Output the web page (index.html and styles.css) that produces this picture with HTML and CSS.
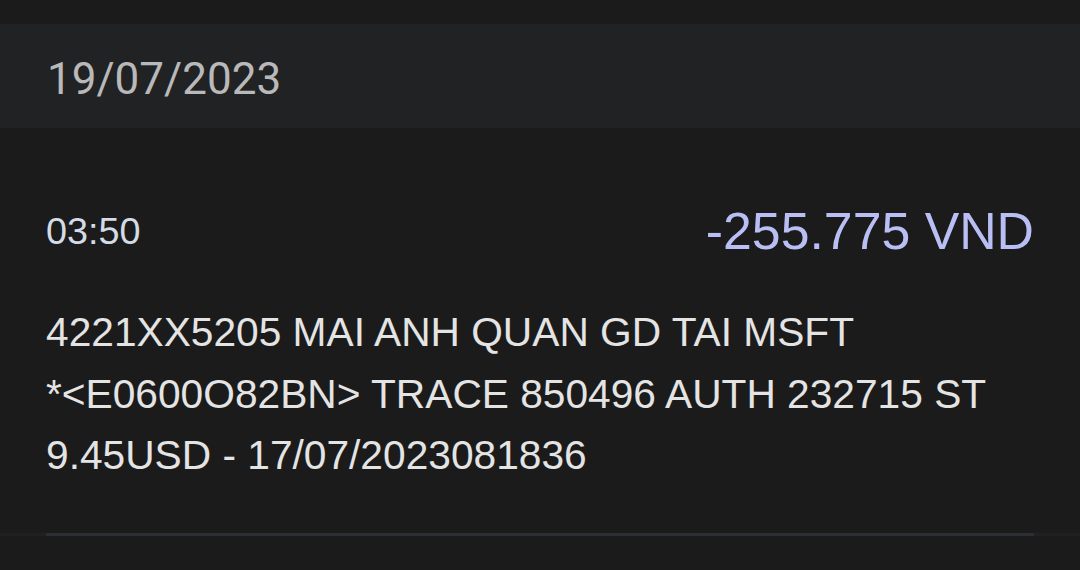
FILE: index.html
```html
<!DOCTYPE html>
<html>
<head>
<meta charset="utf-8">
<link rel="stylesheet" href="styles.css">
</head>
<body>
  <div class="page">
    <div class="topbar"></div>
    <div class="date-header">19/07/2023</div>
    <div class="txn">
      <div class="txn-row">
        <span class="time">03:50</span>
        <span class="amount">-255.775 VND</span>
      </div>
      <p class="desc">4221XX5205 MAI ANH QUAN GD TAI MSFT *&#8288;&lt;E0600O82BN&gt; TRACE 850496 AUTH 232715 ST 9.45USD - 17/07/2023081836</p>
    </div>
    <div class="divider-band"><div class="divider"></div></div>
  </div>
</body>
</html>
```

FILE: styles.css
```css
html, body {
  margin: 0;
  padding: 0;
  background: #1b1b1b;
}
.page {
  width: 1080px;
  height: 570px;
  overflow: hidden;
  background: #1b1b1b;
}
.topbar {
  height: 24px;
  background: #1b1b1b;
}
.date-header {
  height: 104px;
  background: #212224;
  box-sizing: border-box;
  padding-left: 47px;
  padding-top: 6px;
  display: flex;
  align-items: center;
  font-family: Roboto, "Liberation Sans", sans-serif;
  font-size: 44px;
  color: #b9b9b9;
}
.txn {
  padding: 0 46px;
}
.txn-row {
  display: flex;
  justify-content: space-between;
  align-items: center;
  height: 82px;
  margin-top: 62px;
}
.time {
  font-family: "Liberation Sans", Arial, sans-serif;
  font-size: 37.8px;
  color: #d2dbe6;
}
.amount {
  font-family: "Liberation Sans", Arial, sans-serif;
  font-size: 51.8px;
  color: #b9bff5;
}
.desc {
  margin: 30px 0 0 0;
  font-family: "Liberation Sans", Arial, sans-serif;
  font-size: 40.7px;
  line-height: 61.5px;
  color: #e4e4e4;
  height: 231px;
}
.divider-band {
  height: 3px;
  background: #202022;
  padding: 0 46px;
}
.divider {
  height: 3px;
  background: #2b2e33;
}
```
